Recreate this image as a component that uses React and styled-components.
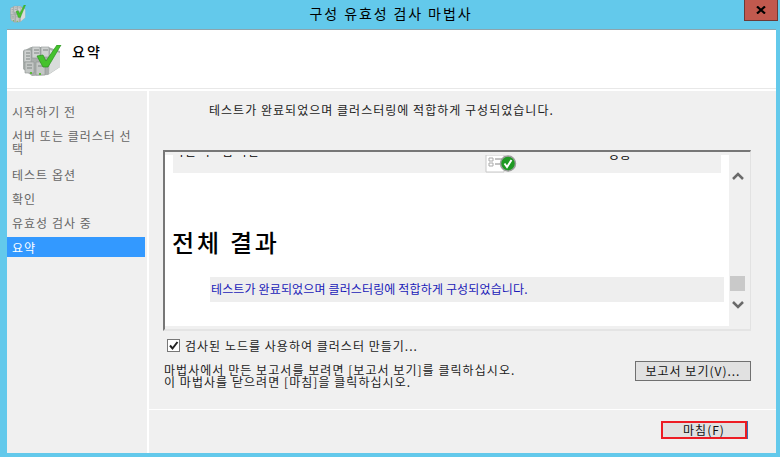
import React from 'react';
import styled, { createGlobalStyle } from 'styled-components';

const Global = createGlobalStyle`
  html, body { margin: 0; padding: 0; width: 780px; height: 457px; overflow: hidden; background: #63c9eb; }
  * { box-sizing: border-box; }
  body { font-family: "Noto Sans CJK KR", "Liberation Sans", sans-serif; font-size: 12px; color: #000; }
`;
const Win = styled.div`width: 780px; height: 457px; display: flex; flex-direction: column; background: #63c9eb;`;
const TitleBar = styled.header`height: 29px; display: flex; align-items: flex-start; padding-left: 10px; position: relative; flex: none;`;
const AppIcon = styled.svg`width: 16px; height: 18px; margin-top: 5px; flex: none;`;
const Title = styled.h1`position: absolute; left: 2px; right: 0; top: 2px; margin: 0; text-align: center; font-size: 14px; font-weight: 400; line-height: 22px; letter-spacing: 1.9px; color: #000;`;
const Close = styled.button`position: absolute; left: 744px; top: 0; width: 34px; height: 21px; padding: 0; background: #c1594e; border: 1px solid #6c3a36; border-top: 0; display: flex; align-items: center; justify-content: center;`;
const Body = styled.div`margin: 0 4px 4px 7px; flex: 1; display: flex; flex-direction: column; background: #fff; min-height: 0; border-top: 1px solid #8da4ad;`;
const Header = styled.div`height: 59px; flex: none; display: flex; align-items: flex-start; background: #fff; border-bottom: 1px solid #e8e8e8; padding: 15px 0 0 15px;`;
const HeaderIcon = styled.svg`width: 40px; height: 32px; flex: none;`;
const HeaderTitle = styled.h2`margin: -3px 0 0 10px; font-size: 14px; font-weight: 500; line-height: 18px; letter-spacing: 2px;`;
const Columns = styled.div`flex: 1; display: flex; gap: 2px; min-height: 0; margin-top: 2px;`;
const Side = styled.nav`width: 140px; flex: none; background: #f0f0f0; padding-top: 14px; display: flex; flex-direction: column;`;
const Step = styled.div`
  padding: 0 2px 0 5px;
  height: ${p => p.$h || 'auto'};
  font-size: 12px; line-height: 13px; letter-spacing: 1.02px; word-break: break-all;
  color: ${p => p.$active ? '#fff' : '#666'};
  background: ${p => p.$active ? '#3399ff' : 'transparent'};
  margin-right: 2px;
  margin-bottom: ${p => p.$mb || 0}px;
  display: ${p => p.$active ? 'flex' : 'block'};
  align-items: center;
`;
const Main = styled.main`flex: 1; background: #f0f0f0; display: flex; flex-direction: column; min-width: 0;`;
const Lead = styled.p`margin: 12px 0 0 60px; height: 46px; font-size: 12px; line-height: 14px; letter-spacing: 1.02px; color: #222;`;
const ReportBox = styled.section`margin: 1px 25px 0 14px; height: 181px; flex: none; border-top: 2px solid #777; border-left: 2px solid #777; border-right: 1px solid #e2e2e2; border-bottom: 2px solid #e4e4e4; display: flex;`;
const Report = styled.div`flex: 1; background: #fff; overflow: hidden; margin: 3px 0 3px; min-width: 0;`;
const ResultRow = styled.div`margin: 0 8px; height: 18px; background: #f0f0f0; overflow: hidden; position: relative;`;
const Cut = styled.div`display: flex; margin-top: -11px; font-size: 12px; line-height: 14px; letter-spacing: 0.35px;`;
const CheckDoc = styled.svg`position: absolute; left: 312px; top: 0; width: 32px; height: 18px;`;
const CutState = styled.span`position: absolute; left: 435px; top: -10px; letter-spacing: 0.6px;`;
const Overall = styled.h3`margin: 55px 0 0 7px; font-size: 24px; line-height: 28px; font-weight: 500; letter-spacing: 2.8px;`;
const Message = styled.div`margin: 21px 5px 0 45px; height: 25px; background: #eeeeee; color: #1a1ab8; font-size: 12px; line-height: 23px; padding-left: 1px; letter-spacing: 0.14px;`;
const Scroll = styled.div`width: 21px; flex: none; background: #f0f0f0; position: relative;`;
const Arrow = styled.svg`position: absolute; left: 3px; top: ${p => p.$top}px; width: 12px; height: 8px;`;
const Thumb = styled.div`position: absolute; left: 1px; top: 124px; width: 15px; height: 15px; background: #c9c9c9;`;
const CheckRow = styled.label`margin: 6px 0 0 18px; display: flex; align-items: center; gap: 5px; height: 16px; font-size: 12px; letter-spacing: 1.02px; color: #222;`;
const Box = styled.span`width: 13px; height: 13px; border: 1px solid #777; background: #fff; display: flex; align-items: center; justify-content: center; flex: none;`;
const InfoRow = styled.div`margin: 7px 25px 0 15px; display: flex; justify-content: space-between; align-items: flex-start;`;
const Info = styled.p`margin: 4px 0 0; font-size: 12px; line-height: 12px; letter-spacing: 1.05px; color: #222;`;
const Button = styled.button`
  width: ${p => p.$w}px; height: 20px; flex: none; padding: 0;
  font: inherit; font-size: 12px; letter-spacing: 1px; line-height: 14px; color: #111;
  background: #e1e1e1; border: ${p => p.$red ? '2px solid #ed1c24' : '1px solid #707070'};
  ${p => p.$red ? 'height: 18px; box-shadow: 1px 0 0 #3c6fb5;' : 'margin-top: 1px;'}
`;
const Footer = styled.div`margin-top: auto; height: 44px; flex: none; border-top: 1px solid #fff; display: flex; justify-content: flex-end; padding: 11px 29px 0 0;`;

const ServerCheck = () => (
  <g>
    <path d="M1 6 L9 2 L26 2 L38 6 L38 22 L26 30 L10 31 L1 24Z" fill="#a9aeac" />
    <path d="M28 5 L38 8 L38 22 L27 29Z" fill="#d9dcdb" />
    <path d="M2 5h7v12H2zM10 2h8v11h-8zM19 2h8v10h-8z" fill="#cfd2d1" stroke="#8f9593" strokeWidth=".6" />
    <path d="M3 17h9v11H3zM14 17h9v13h-9z" fill="#c3c7c5" stroke="#8d9391" strokeWidth=".6" />
    <path d="M4 8h4M4 11h4M4 14h4M12 5h5M12 8h5M21 5h5M5 20h5M5 23h5M16 21h5" stroke="#7f8583" strokeWidth="1" />
    <path d="M8 28h2M17 29h2" stroke="#5cbb3a" strokeWidth="2" />
    <path d="M15 11 L21 10 L24 16 L35 0 L39 0 L26 22 L21 22Z" fill="#45c22d" stroke="#2a8f1f" strokeWidth=".7" />
  </g>
);

export default function App() {
  return (
    <Win>
      <Global />
      <TitleBar>
        <AppIcon viewBox="0 0 40 32" preserveAspectRatio="none"><ServerCheck /></AppIcon>
        <Title>구성 유효성 검사 마법사</Title>
        <Close aria-label="닫기">
          <svg width="10" height="8" viewBox="0 0 10 8"><path d="M1 0.5 L9 7.5M9 0.5 L1 7.5" stroke="#000" strokeWidth="2.2" /></svg>
        </Close>
      </TitleBar>
      <Body>
        <Header>
          <HeaderIcon viewBox="0 0 40 32"><ServerCheck /></HeaderIcon>
          <HeaderTitle>요약</HeaderTitle>
        </Header>
        <Columns>
          <Side>
            <Step $mb={11}>시작하기 전</Step>
            <Step $mb={13}>서버 또는 클러스터 선택</Step>
            <Step $mb={11}>테스트 옵션</Step>
            <Step $mb={11}>확인</Step>
            <Step $mb={8}>유효성 검사 중</Step>
            <Step $active $h="20px">요약</Step>
          </Side>
          <Main>
            <Lead>테스트가 완료되었으며 클러스터링에 적합하게 구성되었습니다.</Lead>
            <ReportBox>
              <Report>
                <ResultRow>
                  <Cut>파일 시스템 확인</Cut>
                  <CheckDoc viewBox="0 0 32 18">
                    <path d="M1 0h18v17H1z" fill="#fff" stroke="#c8c8c8" />
                    <path d="M4 3h4v3H4zM4 8h4v3H4z" fill="none" stroke="#aaa" />
                    <path d="M10 4h8M10 9h6" stroke="#888" />
                    <circle cx="23" cy="8.5" r="7.5" fill="#1f9a23" stroke="#9c9c9c" strokeWidth="1.5" />
                    <path d="M19.5 8.5l2.5 3.5 4.5-7" fill="none" stroke="#fff" strokeWidth="2" />
                  </CheckDoc>
                  <CutState>성공</CutState>
                </ResultRow>
                <Overall>전체 결과</Overall>
                <Message>테스트가 완료되었으며 클러스터링에 적합하게 구성되었습니다.</Message>
              </Report>
              <Scroll>
                <Arrow $top={20} viewBox="0 0 12 8"><path d="M1 7l5-5 5 5" fill="none" stroke="#6a6a6a" strokeWidth="2.5" /></Arrow>
                <Thumb />
                <Arrow $top={149} viewBox="0 0 12 8"><path d="M1 1l5 5 5-5" fill="none" stroke="#6a6a6a" strokeWidth="2.5" /></Arrow>
              </Scroll>
            </ReportBox>
            <CheckRow>
              <Box><svg width="11" height="11" viewBox="0 0 11 11"><path d="M2 5.5l2.5 3L9.5 2" fill="none" stroke="#222" strokeWidth="2" /></svg></Box>
              검사된 노드를 사용하여 클러스터 만들기...
            </CheckRow>
            <InfoRow>
              <Info>마법사에서 만든 보고서를 보려면 [보고서 보기]를 클릭하십시오.<br />이 마법사를 닫으려면 [마침]을 클릭하십시오.</Info>
              <Button $w={116}>보고서 보기(V)...</Button>
            </InfoRow>
            <Footer>
              <Button $red $w={86}>마침(F)</Button>
            </Footer>
          </Main>
        </Columns>
      </Body>
    </Win>
  );
}
